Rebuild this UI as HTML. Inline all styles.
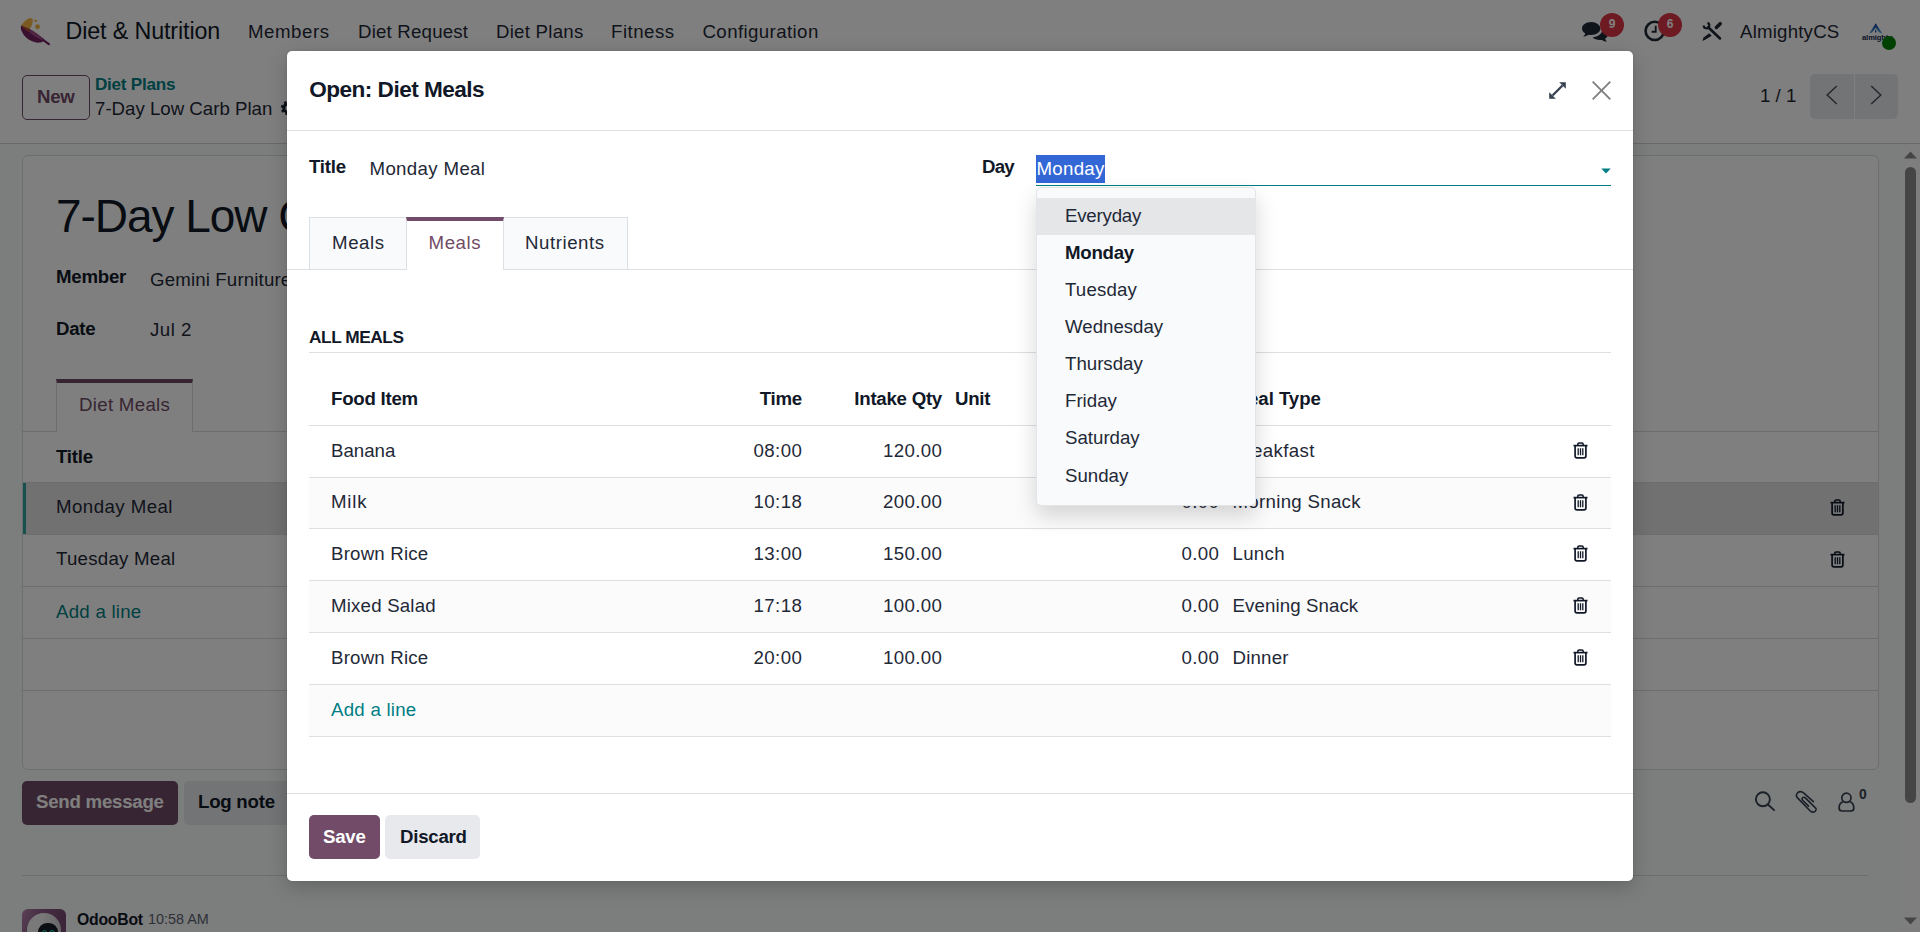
<!DOCTYPE html>
<html lang="en">
<head>
<meta charset="utf-8">
<title>Odoo - 7-Day Low Carb Plan</title>
<style>
*{box-sizing:border-box;margin:0;padding:0}
html,body{width:1920px;height:932px;overflow:hidden}
body{font-family:"Liberation Sans",sans-serif;font-size:18.667px;color:#1f2937;background:#f9fafb;position:relative;line-height:1.5}
/* text positioned by baseline: --b = baseline y in px */
.t{position:absolute;white-space:nowrap;line-height:1.5;top:calc(var(--b)*1px - 1.0965em)}
.b{font-weight:700;letter-spacing:-.25px}
.h{color:#111827}
.teal{color:#017e84}
.pur{color:#714b67}
.ln{position:absolute;height:1px;background:#d8dadd}
svg{position:absolute;overflow:visible}
/* ---------- background page ---------- */
#page{position:absolute;left:0;top:0;width:1920px;height:932px;overflow:hidden;background:#f9fafb}
#nav{position:absolute;left:0;top:0;width:1920px;height:62px;background:#fff}
#cp{position:absolute;left:0;top:62px;width:1920px;height:82px;background:#fff;border-bottom:1px solid #d0d3d8}
#sheet{position:absolute;left:22px;top:155px;width:1857px;height:615px;background:#fff;border:1px solid #d8dadd;border-radius:6px;overflow:hidden}
.badge{position:absolute;width:24.400px;height:24.400px;border-radius:12.200px;background:#dc3545;color:#fff;font-size:12px;font-weight:700;text-align:center;line-height:23.500px}
.btn{position:absolute;border-radius:5px;font-weight:700;font-size:18.667px;white-space:nowrap}
/* ---------- overlay + modal ---------- */
#overlay{position:absolute;left:0;top:0;width:1920px;height:932px;background:rgba(0,0,0,.5)}
#modal{position:absolute;left:287px;top:51px;width:1346px;height:830px;background:#fff;border-radius:5px;box-shadow:0 6px 20px rgba(0,0,0,.2),0 0 2px rgba(0,0,0,.12)}
#modal .ln{background:#dddfe2}
.tab{position:absolute;top:166px;height:53px;border:1px solid #dcdfe3;background:#f9fafb}
.row{position:absolute;left:22px;width:1302px;height:52px}
#dd{position:absolute;left:1036px;top:187px;width:220px;height:319px;background:#f9fafb;border:1px solid #e3e5e8;border-radius:5px;box-shadow:0 10px 22px rgba(0,0,0,.16);overflow:hidden}
</style>
</head>
<body>
<div id="page">
  <div id="nav">
    <!-- app icon -->
    <svg style="left:14px;top:10px" width="48" height="44" viewBox="0 0 48 44">
      <path d="M7.100 15.600C9.500 11.800 13.200 8.500 16.500 8C18.900 8.200 19.400 10.400 18.400 13.200C17.700 16 16.600 17.900 15.600 19.100Z" fill="#f5b547"/>
      <path d="M7.100 15.600C6.200 18 7 21 9.500 24.500C13 29.500 19.500 33 25.500 32.600C27.300 32.400 28.600 31.800 29.600 30.900L30.200 29.300C25.500 25.500 20.500 22 15.600 19.100Z" fill="#742060"/>
      <path d="M15.600 19.100C20.500 22 25.500 25.500 30.200 29.300L29.200 30.600C24.500 28.500 19.500 25.600 15.100 22.200Z" fill="#9e4a88"/>
      <path d="M7.100 15.600L15.600 19.100L15.100 22.200C12 20.500 9.300 18.200 7.100 15.600Z" fill="#b04a30"/>
      <path d="M29.300 30.200L34.900 34.200" stroke="#742060" stroke-width="2.200" stroke-linecap="round" fill="none"/>
      <circle cx="21.600" cy="10.800" r="1.400" fill="#f5b547"/>
      <circle cx="23.500" cy="16.800" r="2.450" fill="#f5b547"/>
    </svg>
    <div class="t h" style="left:65.5px;font-size:23.3px;letter-spacing:-.13px;--b:39.1">Diet &amp; Nutrition</div>
    <div class="t" style="left:248px;--b:38;letter-spacing:.55px">Members</div>
    <div class="t" style="left:358px;--b:38;letter-spacing:.2px">Diet Request</div>
    <div class="t" style="left:496px;--b:38;letter-spacing:.25px">Diet Plans</div>
    <div class="t" style="left:611px;--b:38;letter-spacing:.5px">Fitness</div>
    <div class="t" style="left:702.5px;--b:38;letter-spacing:.4px">Configuration</div>
    <!-- chat icon -->
    <svg style="left:1582px;top:21px" width="26" height="22" viewBox="0 0 26 22" fill="#1f2937">
      <path d="M9.2 1C4.1 1 0 3.9 0 7.5c0 2 1.3 3.8 3.300 5C3 13.600 2.300 14.800 1.200 15.700c2 -.1 3.800 -.8 5.200 -1.900c.9.200 1.800.300 2.800.300c5.100 0 9.200 -2.900 9.200 -6.500S14.300 1 9.200 1z"/>
      <path d="M20.300 8.800c0 3.900 -4.300 7.100 -9.800 7.500c1.600 1.700 4.300 2.800 7.300 2.800c.8 0 1.600 -.1 2.300 -.2c1.300 1 3 1.600 4.800 1.700c-.9 -.8 -1.500 -1.800 -1.800 -2.800c1.800 -1.100 2.900 -2.700 2.900 -4.500c0 -2.400 -2.200 -4.500 -5.700 -5.400z"/>
    </svg>
    <div class="badge" style="left:1600px;top:12.500px">9</div>
    <!-- clock icon -->
    <svg style="left:1643px;top:19px" width="24" height="24" viewBox="0 0 24 24" fill="none" stroke="#1f2937">
      <circle cx="11.700" cy="11.900" r="9.100" stroke-width="2.600"/>
      <path d="M12.700 6.800V12.750H8.600" stroke-width="1.900"/>
    </svg>
    <div class="badge" style="left:1658px;top:12.500px">6</div>
    <!-- tools icon -->
    <svg style="left:1701px;top:21px" width="22" height="21" viewBox="0 0 22 21" fill="none" stroke="#1f2937" stroke-linecap="round">
      <path d="M7.200 6.200L19 17.400" stroke-width="2.700"/>
      <path d="M6.460 1.870A2.800 2.800 0 1 1 2.700 4.500" stroke-width="2.200" stroke-linecap="butt"/>
      <path d="M19.200 2.700L15.400 6.500" stroke-width="3.500"/>
      <path d="M8.300 12.300L10.700 14.700L4.600 18.600L1.300 19.900L2.600 16.600Z" fill="#1f2937" stroke="none"/>
    </svg>
    <div class="t" style="left:1740px;--b:38;letter-spacing:.2px">AlmightyCS</div>
    <!-- avatar logo -->
    <svg style="left:1862px;top:21px" width="30" height="30" viewBox="0 0 30 30">
      <linearGradient id="ag" x1="0" y1="0" x2="0" y2="1"><stop offset="0" stop-color="#143a96"/><stop offset="1" stop-color="#4fa8e0"/></linearGradient>
      <path d="M13.700 2.200L20.200 12.600C18 12.200 16.600 11 15.700 9.600L13.700 6.800L11.700 9.600C10.800 11 9.400 12.200 7.200 12.600Z" fill="url(#ag)"/>
      <path d="M13.700 8.200C14.500 9.300 14.700 10.400 14.300 11.600H13.100C12.800 10.400 13 9.300 13.700 8.200Z" fill="#1d57a8"/>
      <text x="0" y="18.700" font-family="Liberation Sans, sans-serif" font-size="7.600" font-weight="700" fill="#16264f" letter-spacing="-.1">almighty</text>
      <circle cx="27" cy="22" r="7" fill="#008000"/>
    </svg>
  </div>
  <div id="cp">
    <div class="btn pur" style="left:22px;top:13px;width:68px;height:45px;border:1px solid #714b67;background:#fff"></div>
    <div class="t b pur" style="left:37px;--b:41.1">New</div>
    <div class="t b teal" style="left:95px;font-size:17.1px;--b:28.4">Diet Plans</div>
    <div class="t" style="left:95px;--b:53.2">7-Day Low Carb Plan</div>
    <!-- gear (mostly hidden behind dialog) -->
    <svg style="left:281px;top:39px" width="14" height="14" viewBox="0 0 14 14"><circle cx="7" cy="7" r="4.200" fill="none" stroke="#1f2937" stroke-width="3.200"/><circle cx="7" cy="7" r="6" fill="none" stroke="#1f2937" stroke-width="2.400" stroke-dasharray="2.400 2.300"/></svg>
    <div class="t" style="left:1760px;--b:40.2">1 / 1</div>
    <div style="position:absolute;left:1810px;top:12px;width:43.500px;height:45px;background:#e7e9ed;border-radius:5px 0 0 5px"></div>
    <div style="position:absolute;left:1854.500px;top:12px;width:43.500px;height:45px;background:#e7e9ed;border-radius:0 5px 5px 0"></div>
    <svg style="left:1826px;top:23px" width="12" height="20" viewBox="0 0 12 20" fill="none" stroke="#4b5058" stroke-width="1.500"><path d="M10.800 1L1.200 10L10.800 19"/></svg>
    <svg style="left:1870px;top:23px" width="12" height="20" viewBox="0 0 12 20" fill="none" stroke="#4b5058" stroke-width="1.500"><path d="M1.200 1L10.800 10L1.200 19"/></svg>
  </div>
  <div id="sheet">
    <!-- coordinates inside sheet: subtract (23,156) -->
    <div class="t h" style="left:33px;font-size:46px;letter-spacing:-1.050px;--b:76">7-Day Low Carb Plan</div>
    <div class="t b h" style="left:33px;--b:127.9">Member</div>
    <div class="t" style="left:127px;letter-spacing:.15px;--b:130">Gemini Furniture</div>
    <div class="t b h" style="left:33px;--b:179.2">Date</div>
    <div class="t" style="left:127px;letter-spacing:.5px;--b:180">Jul 2</div>
    <!-- notebook -->
    <div class="ln" style="left:0;top:275px;width:1855px"></div>
    <div style="position:absolute;left:33px;top:223px;width:137px;height:53px;background:#fff;border:1px solid #d8dadd;border-top:4px solid #714b67;border-bottom:0"></div>
    <div class="t pur" style="left:56px;letter-spacing:.3px;--b:255">Diet Meals</div>
    <!-- list -->
    <div class="t b h" style="left:33px;--b:307">Title</div>
    <div class="ln" style="left:0;top:326px;width:1855px"></div>
    <div class="ln" style="left:0;top:378px;width:1855px"></div>
    <div style="position:absolute;left:0;top:327px;width:1855px;height:51px;background:#e2e3e5"></div>
    <div style="position:absolute;left:0;top:327px;width:3px;height:51px;background:#2ea098"></div>
    <div class="t" style="left:33px;letter-spacing:.45px;--b:357.800">Monday Meal</div>
    <div class="t" style="left:33px;letter-spacing:.25px;--b:409.700">Tuesday Meal</div>
    <div class="ln" style="left:0;top:430px;width:1855px"></div>
    <div class="t teal" style="left:33px;letter-spacing:.25px;--b:462.100">Add a line</div>
    <div class="ln" style="left:0;top:482px;width:1855px"></div>
    <div class="ln" style="left:0;top:534px;width:1855px"></div>
    <!-- trash icons -->
    <svg style="left:1807px;top:343px" width="15" height="17" viewBox="0 0 15 17"><g fill="none" stroke="#111827"><path d="M0.500 3.600H14.500" stroke-width="1.700"/><path d="M4.800 3.300V2.200C4.800 1.400 5.300 0.900 6.100 0.900H8.900C9.700 0.900 10.200 1.400 10.200 2.200V3.300" stroke-width="1.500"/><path d="M2.100 4V14C2.100 15.200 2.800 15.900 4 15.900H11C12.200 15.900 12.900 15.200 12.900 14V4" stroke-width="1.700"/><path d="M5.200 6.300V13.200M7.500 6.300V13.200M9.800 6.300V13.200" stroke-width="1.300"/></g></svg>
    <svg style="left:1807px;top:395px" width="15" height="17" viewBox="0 0 15 17"><g fill="none" stroke="#111827"><path d="M0.500 3.600H14.500" stroke-width="1.700"/><path d="M4.800 3.300V2.200C4.800 1.400 5.300 0.900 6.100 0.900H8.900C9.700 0.900 10.200 1.400 10.200 2.200V3.300" stroke-width="1.500"/><path d="M2.100 4V14C2.100 15.200 2.800 15.900 4 15.900H11C12.200 15.900 12.900 15.200 12.900 14V4" stroke-width="1.700"/><path d="M5.200 6.300V13.200M7.500 6.300V13.200M9.800 6.300V13.200" stroke-width="1.300"/></g></svg>
  </div>
  <!-- chatter -->
  <div class="btn" style="left:22px;top:781px;width:156px;height:44px;background:#714b67"></div>
  <div class="t b" style="left:36px;--b:808.200;color:#fff">Send message</div>
  <div class="btn" style="left:184px;top:781px;width:106px;height:44px;background:#e7e9ed"></div>
  <div class="t b h" style="left:198px;--b:808.200">Log note</div>
  <svg style="left:1754px;top:790px" width="22" height="22" viewBox="0 0 22 22" fill="none" stroke="#374151" stroke-width="1.900"><circle cx="8.900" cy="9.300" r="7"/><path d="M13.900 14.500L20.100 20.100" stroke-linecap="round"/></svg>
  <svg style="left:1795px;top:790px" width="23" height="24" viewBox="0 0 23 24" fill="none" stroke="#374151" stroke-width="1.600" stroke-linecap="round" stroke-linejoin="round"><path d="M18.400 11.700L8.600 2.900C6.800 1.200 4.200 1.200 2.700 2.800C1.200 4.400 1.200 6.600 2.500 7.900L15 20.800C16.600 22.500 18.800 22.600 20.200 21.200C21.600 19.800 21.400 18.600 19.700 17.100L10.300 7.900C9.300 7 8.200 7 7.500 7.800C6.800 8.600 6.800 9.500 7.600 10.300L13.600 16.100"/></svg>
  <svg style="left:1838px;top:793px" width="18" height="19" viewBox="0 0 18 19" fill="none" stroke="#374151" stroke-width="1.700"><circle cx="8.400" cy="4.800" r="4.600"/><path d="M5 8.800C2.400 9.800 1.100 12.200 1.100 15C1.100 16.900 2.200 18 4 18H12.900C14.700 18 15.800 16.900 15.800 15C15.800 12.200 14.500 9.800 11.900 8.800"/></svg>
  <div class="t b" style="left:1859px;font-size:13.800px;letter-spacing:0;--b:800.400;color:#374151">0</div>
  <div class="ln" style="left:22px;top:875px;width:1846px"></div>
  <!-- OdooBot avatar -->
  <div style="position:absolute;left:22px;top:909px;width:44px;height:44px;border-radius:6px;background:linear-gradient(115deg,#b482ae 0%,#8a5a82 35%,#774a70 70%);overflow:hidden">
    <div style="position:absolute;left:5px;top:4px;width:34px;height:34px;border-radius:17px;background:linear-gradient(100deg,#f4f2f4 40%,#c9c5c9)"></div>
    <div style="position:absolute;left:16px;top:13.500px;width:20px;height:19px;border-radius:9px;background:#161c26"></div>
    <div style="position:absolute;left:19.500px;top:20.500px;width:5.500px;height:6px;border-radius:3px;border:1.200px solid #1fd3c6"></div>
    <div style="position:absolute;left:27px;top:20.500px;width:5.500px;height:6px;border-radius:3px;border:1.200px solid #1fd3c6"></div>
  </div>
  <div class="t b h" style="left:77px;font-size:15.800px;--b:925">OdooBot</div>
  <div class="t" style="left:148px;font-size:14.400px;--b:925;color:#5b6370">10:58 AM</div>
  <!-- page scrollbar -->
  <div style="position:absolute;left:1900px;top:144px;width:20px;height:788px;background:#fcfcfc"></div>
  <div style="position:absolute;left:1905px;top:166.800px;width:11px;height:636px;border-radius:5.500px;background:#8b8b8b"></div>
  <svg style="left:1904px;top:151px" width="13" height="8" viewBox="0 0 13 8"><path d="M0 7.500L6.500 0.500L13 7.500Z" fill="#8b8b8b"/></svg>
  <svg style="left:1904px;top:916.500px" width="13" height="8" viewBox="0 0 13 8"><path d="M0 0.500L6.500 7.500L13 0.500Z" fill="#8b8b8b"/></svg>
</div>

<div id="overlay"></div>
<div id="modal">
  <!-- coordinates inside modal: subtract (287,51) -->
  <div class="t b h" style="left:22.200px;font-size:22.600px;letter-spacing:-.52px;--b:46.400">Open: Diet Meals</div>
  <svg style="left:1262px;top:31px" width="17" height="17" viewBox="0 0 17 17" fill="#374151"><path d="M16.800 0.200V6.800L10.200 0.200Z"/><path d="M0.200 16.800V10.200L6.800 16.800Z"/><path d="M3.500 13.500L13.500 3.500" stroke="#374151" stroke-width="2.300" fill="none"/></svg>
  <svg style="left:1305px;top:30px" width="19" height="19" viewBox="0 0 19 19" fill="none" stroke="#808080" stroke-width="1.900"><path d="M0.700 0.700L18.300 18.300M18.300 0.700L0.700 18.300"/></svg>
  <div class="ln" style="left:0;top:79px;width:1346px"></div>
  <!-- fields -->
  <div class="t b h" style="left:22px;--b:122.300">Title</div>
  <div class="t" style="left:82.5px;letter-spacing:.35px;--b:124">Monday Meal</div>
  <div class="t b h" style="left:695px;letter-spacing:-.8px;--b:122.300">Day</div>
  <div style="position:absolute;left:749px;top:104px;width:69px;height:28px;background:#3367d6"></div>
  <div class="t" style="left:749.500px;letter-spacing:.3px;--b:124;color:#fff">Monday</div>
  <div style="position:absolute;left:749px;top:134px;width:575px;height:1px;background:#017e84"></div>
  <svg style="left:1314px;top:116.700px" width="10" height="6" viewBox="0 0 10 6"><path d="M0.300 0.500H9.700L5 5.500Z" fill="#017e84"/></svg>
  <!-- notebook tabs -->
  <div class="ln" style="left:0;top:218px;width:1346px"></div>
  <div class="tab" style="left:22px;width:98px"></div>
  <div class="tab" style="left:216px;width:125px"></div>
  <div class="tab" style="left:119px;width:98px;background:#fff;border-top:4px solid #714b67;border-bottom:0"></div>
  <div class="t" style="left:45px;letter-spacing:.6px;--b:198.300">Meals</div>
  <div class="t pur" style="left:141.5px;letter-spacing:.6px;--b:198.300">Meals</div>
  <div class="t" style="left:238px;letter-spacing:.55px;--b:198.300">Nutrients</div>
  <!-- section -->
  <div class="t b h" style="left:22px;font-size:17.300px;letter-spacing:-.45px;--b:292.900">ALL MEALS</div>
  <div class="ln" style="left:22px;top:301px;width:1302px"></div>
  <!-- table -->
  <div class="row" style="top:426px;background:#fbfbfb"></div>
  <div class="row" style="top:530px;background:#fbfbfb"></div>
  <div class="row" style="top:633px;background:#fbfbfb"></div>
  <div class="ln" style="left:22px;top:374px;width:1302px"></div>
  <div class="ln" style="left:22px;top:426px;width:1302px"></div>
  <div class="ln" style="left:22px;top:477px;width:1302px"></div>
  <div class="ln" style="left:22px;top:529px;width:1302px"></div>
  <div class="ln" style="left:22px;top:581px;width:1302px"></div>
  <div class="ln" style="left:22px;top:633px;width:1302px"></div>
  <div class="ln" style="left:22px;top:685px;width:1302px"></div>
  <div class="t b h" style="left:44px;--b:354.200">Food Item</div>
  <div class="t b h" style="right:831px;--b:354.200">Time</div>
  <div class="t b h" style="right:691px;--b:354.200">Intake Qty</div>
  <div class="t b h" style="left:668px;--b:354.200">Unit</div>
  <div class="t b h" style="left:945.500px;letter-spacing:-.05px;--b:354.200">Meal Type</div>

  <div class="t" style="left:44px;--b:406">Banana</div>
  <div class="t" style="right:830.600px;letter-spacing:.45px;--b:406">08:00</div>
  <div class="t" style="right:690.600px;letter-spacing:.4px;--b:406">120.00</div>
  <div class="t" style="right:413.600px;letter-spacing:.4px;--b:406">0.00</div>
  <div class="t" style="left:945.500px;letter-spacing:.4px;--b:406">Breakfast</div>

  <div class="t" style="left:44px;letter-spacing:.8px;--b:457.800">Milk</div>
  <div class="t" style="right:830.600px;letter-spacing:.45px;--b:457.800">10:18</div>
  <div class="t" style="right:690.600px;letter-spacing:.4px;--b:457.800">200.00</div>
  <div class="t" style="right:413.600px;letter-spacing:.4px;--b:457.800">0.00</div>
  <div class="t" style="left:945.500px;letter-spacing:.3px;--b:457.800">Morning Snack</div>

  <div class="t" style="left:44px;letter-spacing:.2px;--b:509.500">Brown Rice</div>
  <div class="t" style="right:830.600px;letter-spacing:.45px;--b:509.500">13:00</div>
  <div class="t" style="right:690.600px;letter-spacing:.4px;--b:509.500">150.00</div>
  <div class="t" style="right:413.600px;letter-spacing:.4px;--b:509.500">0.00</div>
  <div class="t" style="left:945.500px;letter-spacing:.3px;--b:509.500">Lunch</div>

  <div class="t" style="left:44px;letter-spacing:.2px;--b:561.200">Mixed Salad</div>
  <div class="t" style="right:830.600px;letter-spacing:.45px;--b:561.200">17:18</div>
  <div class="t" style="right:690.600px;letter-spacing:.4px;--b:561.200">100.00</div>
  <div class="t" style="right:413.600px;letter-spacing:.4px;--b:561.200">0.00</div>
  <div class="t" style="left:945.500px;letter-spacing:.1px;--b:561.200">Evening Snack</div>

  <div class="t" style="left:44px;letter-spacing:.2px;--b:613">Brown Rice</div>
  <div class="t" style="right:830.600px;letter-spacing:.45px;--b:613">20:00</div>
  <div class="t" style="right:690.600px;letter-spacing:.4px;--b:613">100.00</div>
  <div class="t" style="right:413.600px;letter-spacing:.4px;--b:613">0.00</div>
  <div class="t" style="left:945.500px;letter-spacing:.2px;--b:613">Dinner</div>

  <div class="t teal" style="left:44px;letter-spacing:.25px;--b:665">Add a line</div>

  <svg style="left:1286px;top:391px" width="15" height="17" viewBox="0 0 15 17"><g fill="none" stroke="#111827"><path d="M0.500 3.600H14.500" stroke-width="1.700"/><path d="M4.800 3.300V2.200C4.800 1.400 5.300 0.900 6.100 0.900H8.900C9.700 0.900 10.200 1.400 10.200 2.200V3.300" stroke-width="1.500"/><path d="M2.100 4V14C2.100 15.200 2.800 15.900 4 15.900H11C12.200 15.900 12.900 15.200 12.900 14V4" stroke-width="1.700"/><path d="M5.200 6.300V13.200M7.500 6.300V13.200M9.800 6.300V13.200" stroke-width="1.300"/></g></svg>
  <svg style="left:1286px;top:443px" width="15" height="17" viewBox="0 0 15 17"><g fill="none" stroke="#111827"><path d="M0.500 3.600H14.500" stroke-width="1.700"/><path d="M4.800 3.300V2.200C4.800 1.400 5.300 0.900 6.100 0.900H8.900C9.700 0.900 10.200 1.400 10.200 2.200V3.300" stroke-width="1.500"/><path d="M2.100 4V14C2.100 15.200 2.800 15.900 4 15.900H11C12.200 15.900 12.900 15.200 12.900 14V4" stroke-width="1.700"/><path d="M5.200 6.300V13.200M7.500 6.300V13.200M9.800 6.300V13.200" stroke-width="1.300"/></g></svg>
  <svg style="left:1286px;top:494px" width="15" height="17" viewBox="0 0 15 17"><g fill="none" stroke="#111827"><path d="M0.500 3.600H14.500" stroke-width="1.700"/><path d="M4.800 3.300V2.200C4.800 1.400 5.300 0.900 6.100 0.900H8.900C9.700 0.900 10.200 1.400 10.200 2.200V3.300" stroke-width="1.500"/><path d="M2.100 4V14C2.100 15.200 2.800 15.900 4 15.900H11C12.200 15.900 12.900 15.200 12.900 14V4" stroke-width="1.700"/><path d="M5.200 6.300V13.200M7.500 6.300V13.200M9.800 6.300V13.200" stroke-width="1.300"/></g></svg>
  <svg style="left:1286px;top:546px" width="15" height="17" viewBox="0 0 15 17"><g fill="none" stroke="#111827"><path d="M0.500 3.600H14.500" stroke-width="1.700"/><path d="M4.800 3.300V2.200C4.800 1.400 5.300 0.900 6.100 0.900H8.900C9.700 0.900 10.200 1.400 10.200 2.200V3.300" stroke-width="1.500"/><path d="M2.100 4V14C2.100 15.200 2.800 15.900 4 15.900H11C12.200 15.900 12.900 15.200 12.900 14V4" stroke-width="1.700"/><path d="M5.200 6.300V13.200M7.500 6.300V13.200M9.800 6.300V13.200" stroke-width="1.300"/></g></svg>
  <svg style="left:1286px;top:598px" width="15" height="17" viewBox="0 0 15 17"><g fill="none" stroke="#111827"><path d="M0.500 3.600H14.500" stroke-width="1.700"/><path d="M4.800 3.300V2.200C4.800 1.400 5.300 0.900 6.100 0.900H8.900C9.700 0.900 10.200 1.400 10.200 2.200V3.300" stroke-width="1.500"/><path d="M2.100 4V14C2.100 15.200 2.800 15.900 4 15.900H11C12.200 15.900 12.900 15.200 12.900 14V4" stroke-width="1.700"/><path d="M5.200 6.300V13.200M7.500 6.300V13.200M9.800 6.300V13.200" stroke-width="1.300"/></g></svg>
  <!-- footer -->
  <div class="ln" style="left:0;top:742px;width:1346px"></div>
  <div class="btn" style="left:22px;top:764px;width:71px;height:44px;background:#714b67"></div>
  <div class="t b" style="left:36px;--b:792.500;color:#fff">Save</div>
  <div class="btn" style="left:98px;top:764px;width:95px;height:44px;background:#e7e9ed"></div>
  <div class="t b h" style="left:113px;--b:792.500">Discard</div>
</div>
<!-- selection dropdown (page coordinates) -->
<div id="dd">
  <div style="position:absolute;left:0;top:10px;width:220px;height:37px;background:#e5e6e8"></div>
  <div class="t" style="left:28px;letter-spacing:-.2px;--b:34">Everyday</div>
  <div class="t b h" style="left:28px;--b:71.100">Monday</div>
  <div class="t" style="left:28px;letter-spacing:.15px;--b:108.300">Tuesday</div>
  <div class="t" style="left:28px;--b:145.400">Wednesday</div>
  <div class="t" style="left:28px;--b:182.500">Thursday</div>
  <div class="t" style="left:28px;--b:219.800">Friday</div>
  <div class="t" style="left:28px;--b:256.900">Saturday</div>
  <div class="t" style="left:28px;--b:294">Sunday</div>
</div>
</body>
</html>
